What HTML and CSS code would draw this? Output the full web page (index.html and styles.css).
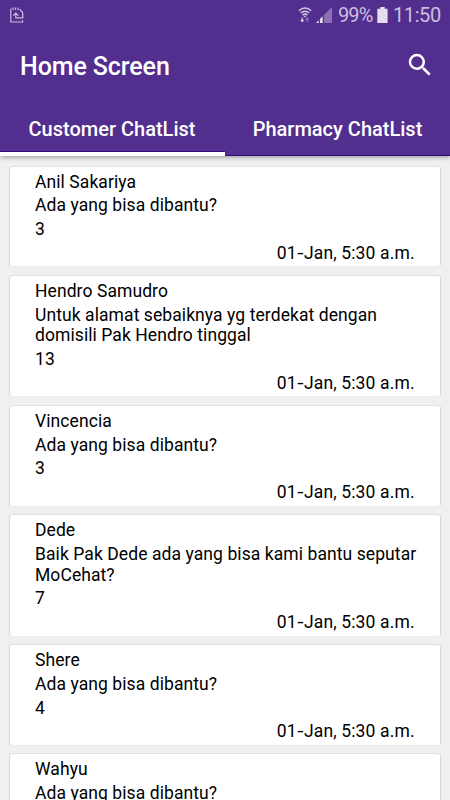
FILE: index.html
```html
<!DOCTYPE html>
<html lang="id">
<head>
<meta charset="utf-8">
<meta name="viewport" content="width=device-width, initial-scale=1">
<title>Home Screen</title>
<link rel="stylesheet" href="styles.css">
</head>
<body>
<header class="appbar">
  <div class="status">
    <svg class="note" width="14" height="16" viewBox="0 0 14 16" fill="none" stroke="#c9bcdd" stroke-width="1.2">
      <path d="M.8 1.5V15H12.6V13.2M12.6 11V5.5L9.6 2.2M3 .4V3M5.5.4V3M8 .4V3"/>
      <path d="M3.2 8.6L5.8 6L8.4 8.6M5.8 6.3V10.8H12.6V8"/>
    </svg>
    <div class="status-right">
      <svg class="wifi" width="14" height="16" viewBox="0 0 14 16" fill="none" stroke="#d5cae4" stroke-width="1.5">
        <path d="M.8 3.7Q7-1.7 13.2 3.7M2.8 6Q7 2.4 11.2 6M4.7 8.1Q7 6.2 9.3 8.1"/>
        <path d="M5.6 9H8.4L7 10.4Z" fill="#d5cae4" stroke="none"/>
        <path d="M4.2 10.5V14M2.8 12.8L4.2 14.6L5.6 12.8" stroke-width="1.2"/>
        <path d="M9.2 15V11.4M7.8 12.6L9.2 11L10.6 12.6" stroke="#8d74b4" stroke-width="1.2"/>
      </svg>
      <svg class="signal" width="16" height="16" viewBox="0 0 16 16">
        <path d="M0 16L16 0V16Z" fill="#8b70b4"/>
        <path d="M0 16L2.8 13.2V16ZM4 16V12L6.8 9.2V16Z" fill="#e4dced"/>
        <path d="M2.8 13.2L4 12V16H2.8ZM6.8 9.2L8 8V16H6.8Z" fill="#522e8f"/>
      </svg>
      <span class="percent">99%</span>
      <svg class="battery" width="11" height="16" viewBox="0 0 11 16"><path d="M3.3 0H7.7V1.7H10.6V16H.3V1.7H3.3Z" fill="#e5deef"/></svg>
      <span class="clock">11:50</span>
    </div>
  </div>
  <div class="toolbar">
    <h1>Home Screen</h1>
    <svg width="30" height="30" viewBox="0 0 24 24" fill="#fff"><path d="M15.5 14h-.79l-.28-.27A6.47 6.47 0 0 0 16 9.5 6.5 6.5 0 1 0 9.5 16c1.61 0 3.09-.59 4.23-1.57l.27.28v.79l5 4.99L20.49 19l-4.99-5zm-6 0A4.5 4.5 0 1 1 14 9.5 4.49 4.49 0 0 1 9.5 14z"/></svg>
  </div>
  <nav class="tabs">
    <div class="tab active"><span>Customer ChatList</span></div>
    <div class="tab"><span>Pharmacy ChatList</span></div>
  </nav>
</header>
<main class="list">
  <article class="card"><p class="name">Anil Sakariya</p><p>Ada yang bisa dibantu?</p><p>3</p><time>01<span class="dash">-</span>Jan, 5:30 a.m.</time></article>
  <article class="card"><p class="name">Hendro Samudro</p><p>Untuk alamat sebaiknya yg terdekat dengan<br>domisili Pak Hendro tinggal</p><p>13</p><time>01<span class="dash">-</span>Jan, 5:30 a.m.</time></article>
  <article class="card"><p class="name">Vincencia</p><p>Ada yang bisa dibantu?</p><p>3</p><time>01<span class="dash">-</span>Jan, 5:30 a.m.</time></article>
  <article class="card"><p class="name">Dede</p><p>Baik Pak Dede ada yang bisa kami bantu seputar<br>MoCehat?</p><p>7</p><time>01<span class="dash">-</span>Jan, 5:30 a.m.</time></article>
  <article class="card"><p class="name">Shere</p><p>Ada yang bisa dibantu?</p><p>4</p><time>01<span class="dash">-</span>Jan, 5:30 a.m.</time></article>
  <article class="card"><p class="name">Wahyu</p><p>Ada yang bisa dibantu?</p></article>
</main>
</body>
</html>
```
FILE: styles.css
```css
* { box-sizing: border-box; }
body {
  margin: 0;
  height: 800px;
  overflow: hidden;
  background: #f0f0f0;
  color: #000;
  font-family: Roboto, "Liberation Sans", sans-serif;
}
h1, p { margin: 0; }
svg { display: block; flex: none; }
.appbar {
  position: relative;
  height: 156px;
  background: #522e8f;
  color: #fff;
  border-bottom: 1px solid #38087f;
  box-shadow: 0 1px 5px rgba(0, 0, 0, .4);
}
.status {
  display: flex;
  justify-content: space-between;
  height: 30px;
  padding: 7px 11px 0 10px;
}
.status-right { display: flex; height: 16px; }
.signal { margin-left: 4px; }
.percent, .clock {
  color: #cbbfdd;
  font-size: 20px;
  line-height: 17px;
  white-space: nowrap;
}
.percent { width: 35px; margin-left: 6px; letter-spacing: -.9px; }
.battery { margin-left: 4px; }
.clock { width: 46px; margin-left: 5px; letter-spacing: -.4px; }
.toolbar {
  display: flex;
  align-items: center;
  justify-content: space-between;
  height: 70px;
  padding: 4px 15px 0 20px;
}
.toolbar svg { margin-top: -5px; }
h1 { font-size: 25px; font-weight: 500; line-height: 30px; letter-spacing: -.1px; }
.tabs { display: flex; height: 56px; }
.tab {
  width: 50%;
  height: 55px;
  padding-top: 17px;
  text-align: center;
  font-size: 20px;
  font-weight: 500;
  line-height: 24px;
}
.active {
  height: 56px;
  padding-right: 1px;
  border-bottom: 4px solid #fff;
  box-shadow: inset 0 -1px #38087f;
}
.list {
  display: flex;
  flex-direction: column;
  gap: 9.4px;
  height: 644px;
  padding: 10.5px 10px 0;
  overflow: hidden;
}
.card {
  display: flex;
  flex: none;
  flex-direction: column;
  gap: 3.2px;
  padding: 5.15px 25px 2.85px;
  border-radius: 2px;
  background: #fff;
  box-shadow: 0 -1px 1px rgba(0, 0, 0, .05), 1px 0 1px rgba(0, 0, 0, .1), -1px 0 1px rgba(0, 0, 0, .1);
  font-size: 17.5px;
  line-height: 20.6px;
  letter-spacing: .08px;
  white-space: nowrap;
}
.dash { display: inline-block; padding: 0 1.1px; transform: scaleX(1.3); }
time { align-self: flex-end; letter-spacing: .14px; margin-right: .3px; }
```
